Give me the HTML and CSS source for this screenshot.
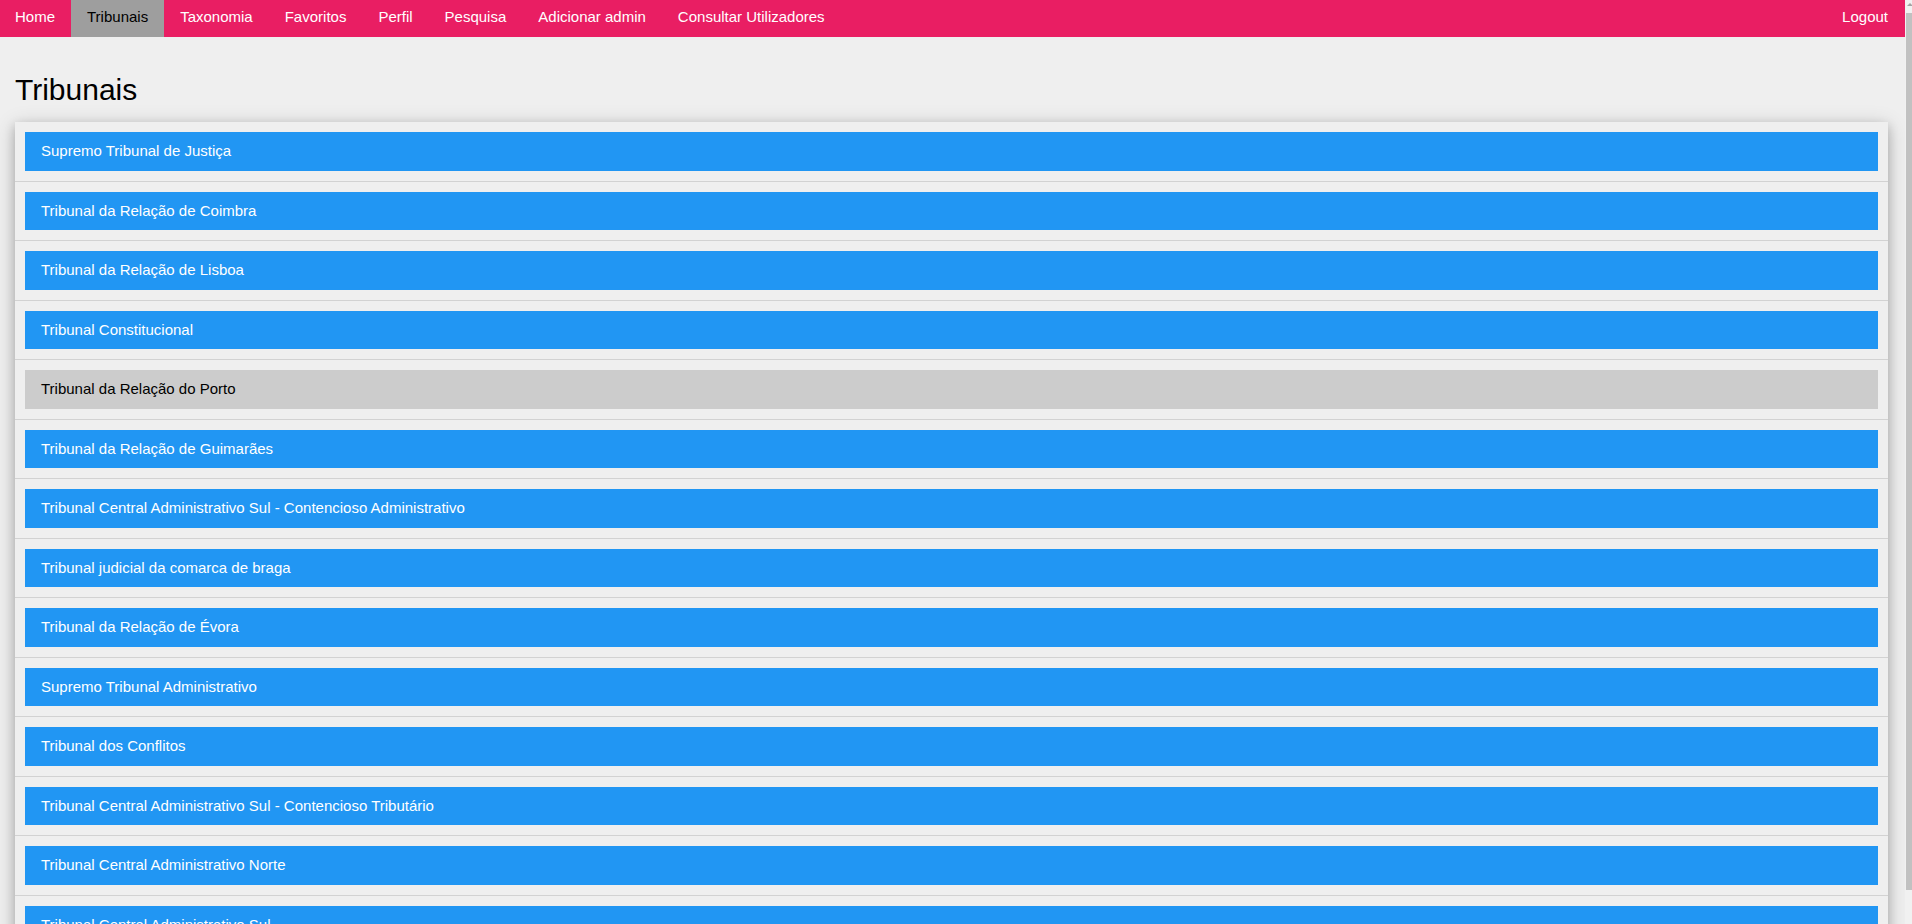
FILE: index.html
```html
<!DOCTYPE html>
<html lang="pt">
<head>
<meta charset="utf-8">
<title>Tribunais</title>
<link rel="stylesheet" href="styles.css">
</head>
<body>
<nav class="bar">
  <a class="bar-item" href="#">Home</a>
  <a class="bar-item active" href="#">Tribunais</a>
  <a class="bar-item" href="#">Taxonomia</a>
  <a class="bar-item" href="#">Favoritos</a>
  <a class="bar-item" href="#">Perfil</a>
  <a class="bar-item" href="#">Pesquisa</a>
  <a class="bar-item" href="#">Adicionar admin</a>
  <a class="bar-item" href="#">Consultar Utilizadores</a>
  <a class="bar-item right" href="#">Logout</a>
</nav>
<main class="container">
  <h2 class="title">Tribunais</h2>
  <ul class="card-list">
    <li><a class="btn" href="#">Supremo Tribunal de Justiça</a></li>
    <li><a class="btn" href="#">Tribunal da Relação de Coimbra</a></li>
    <li><a class="btn" href="#">Tribunal da Relação de Lisboa</a></li>
    <li><a class="btn" href="#">Tribunal Constitucional</a></li>
    <li><a class="btn hover" href="#">Tribunal da Relação do Porto</a></li>
    <li><a class="btn" href="#">Tribunal da Relação de Guimarães</a></li>
    <li><a class="btn" href="#">Tribunal Central Administrativo Sul - Contencioso Administrativo</a></li>
    <li><a class="btn" href="#">Tribunal judicial da comarca de braga</a></li>
    <li><a class="btn" href="#">Tribunal da Relação de Évora</a></li>
    <li><a class="btn" href="#">Supremo Tribunal Administrativo</a></li>
    <li><a class="btn" href="#">Tribunal dos Conflitos</a></li>
    <li><a class="btn" href="#">Tribunal Central Administrativo Sul - Contencioso Tributário</a></li>
    <li><a class="btn" href="#">Tribunal Central Administrativo Norte</a></li>
    <li><a class="btn" href="#">Tribunal Central Administrativo Sul</a></li>
  </ul>
</main>
<div class="scrollbar" aria-hidden="true">
  <span class="scroll-arrow"></span>
  <span class="scroll-thumb"></span>
</div>
</body>
</html>
```
FILE: styles.css
```css
html {
  background: #efefef;
}
body {
  margin: 0 7px 0 0;
  font-family: "Liberation Sans", Arial, sans-serif;
  font-size: 15px;
  line-height: 1.5;
  color: #000;
  background: #efefef;
}
.bar {
  display: flex;
  height: 37px;
  background: #e91e63;
}
.bar-item {
  display: block;
  padding: 6px 16px 8.5px;
  color: #fff;
  text-decoration: none;
  white-space: nowrap;
}
.bar-item:first-child {
  padding-left: 15px;
}
.bar-item.active {
  background: #9e9e9e;
  color: #000;
}
.bar-item.right {
  margin-left: auto;
  padding-right: 17px;
}
.container {
  padding: 0 17px 0 15px;
}
.title {
  margin: 30px 0 10px;
  font-size: 30px;
  line-height: 45px;
  font-weight: 400;
}
.card-list {
  list-style: none;
  margin: 0;
  padding: 0;
  background: #efefef;
  box-shadow: 0 4px 10px 0 rgba(0,0,0,0.2), 0 4px 20px 0 rgba(0,0,0,0.19);
}
.card-list li {
  padding: 10px;
  border-bottom: 1px solid #d2d2d2;
}
.btn {
  display: block;
  padding: 8px 16px;
  background: #2196f3;
  color: #fff;
  text-decoration: none;
  white-space: nowrap;
}
.btn.hover {
  background: #ccc;
  color: #000;
}
.scrollbar {
  position: fixed;
  top: 0;
  right: 0;
  bottom: 0;
  width: 7px;
  background: #f1f1f1;
}
.scroll-arrow {
  position: absolute;
  top: 3px;
  left: 2px;
  width: 0;
  height: 0;
  border-left: 3px solid transparent;
  border-right: 3px solid transparent;
  border-bottom: 3px solid #a3a3a3;
}
.scroll-thumb {
  position: absolute;
  top: 13px;
  left: 1px;
  width: 6px;
  height: 877px;
  background: #c1c1c1;
}
```
